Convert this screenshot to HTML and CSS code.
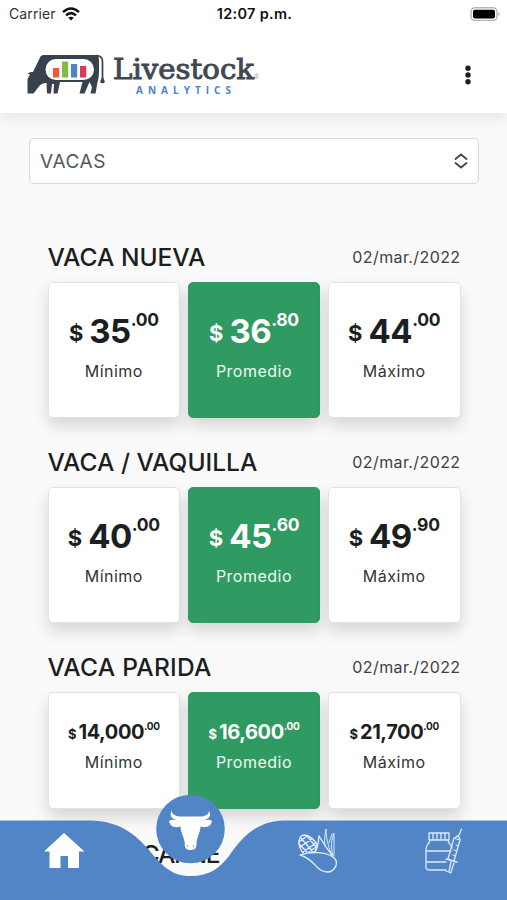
FILE: index.html
```html
<!DOCTYPE html>
<html lang="es">
<head>
    <meta charset="UTF-8">
    <meta name="viewport" content="width=device-width, initial-scale=1.0">
    <title>Livestock Analytics</title>
    <link rel="stylesheet" href="styles.css">
</head>
<body>

    <!-- Header -->
    <header class="header">
        <div class="status-bar">
            <div class="carrier">
                <span>Carrier</span>
                <svg width="18" height="14" viewBox="0 0 18 14" fill="none" stroke="#111" stroke-width="2.5">
                    <path d="M1 5.2Q9-2.2 17 5.2M4 8.4Q9 3.8 14 8.4"/>
                    <path d="M9 13.6L6.2 10.8Q9 8.5 11.8 10.8Z" fill="#111" stroke="none"/>
                </svg>
            </div>
            <span class="clock">12:07 p.m.</span>
            <svg class="battery" width="31" height="14" viewBox="0 0 31 14">
                <rect x="1" y="0.8" width="26" height="12.6" rx="4" fill="#fff" stroke="#b5b5b5" stroke-width="1.4"/>
                <rect x="3" y="2.8" width="22" height="8.6" rx="1.8" fill="#000"/>
                <path d="M28.5 4.8Q31 7 28.5 9.2Z" fill="#b5b5b5"/>
            </svg>
        </div>
        <div class="navbar">
            <svg class="logo" width="236" height="44" viewBox="0 0 236 44">
                <!-- Cow -->
                <path d="M13.5 2.500Q14.500 1 16.500 1H68Q72 1 72 6V16Q72 24 70.500 28L68.500 39.500H63.500L65 33L62.500 28L57.500 39.500H52.500L55.500 28H33L30.500 39.500H26.500L27 30H25L24 39.500H20L19.500 29Q14 29 11.500 33L6.500 39.500H0.500V25L3 20.500L0.500 19.500Q3 17.500 6 18Z" fill="#38424d"/>
                <path d="M69 1.700Q75.500 1.500 75.500 8V25" fill="none" stroke="#38424d" stroke-width="1.700"/>
                <path d="M75.500 22L78 28Q75.500 30.500 73 28Z" fill="#38424d"/>
                <rect x="18.500" y="5" width="48.500" height="21" rx="10.500" fill="#fff"/>
                <rect x="26" y="14" width="6.200" height="9.500" fill="#ed5a34"/>
                <rect x="35" y="7.500" width="6.200" height="16" fill="#7fba42"/>
                <rect x="44" y="10" width="6.200" height="13.500" fill="#4a82cc"/>
                <rect x="53" y="12" width="6.200" height="11.500" fill="#dc3b51"/>
                <text class="logo-name" x="86" y="25" textLength="141" lengthAdjust="spacingAndGlyphs">Livestock</text>
                <text class="logo-mark" x="227" y="25">®</text>
                <text class="logo-sub" x="109" y="39.500" textLength="95">ANALYTICS</text>
            </svg>
            <svg class="menu" width="8" height="20" viewBox="0 0 8 20" fill="#1b1f22">
                <circle cx="4" cy="3.200" r="2.700"/>
                <circle cx="4" cy="10" r="2.700"/>
                <circle cx="4" cy="16.800" r="2.700"/>
            </svg>
        </div>
    </header>

    <!-- Category select -->
    <div class="select">
        <span>VACAS</span>
        <svg width="14" height="16" viewBox="0 0 14 16" fill="none" stroke="#3e4449" stroke-width="1.800" stroke-linecap="round" stroke-linejoin="round">
            <path d="M1.500 6L7 1.500L12.500 6M1.500 10L7 14.500L12.500 10"/>
        </svg>
    </div>

    <!-- Prices -->
    <main class="prices">
        <section class="group">
            <div class="group-header">
                <h2>VACA NUEVA</h2>
                <span class="date">02/mar./2022</span>
            </div>
            <div class="cards">
                <div class="card">
                    <div class="price"><small>$</small><b>35</b><sup>.00</sup></div>
                    <p>Mínimo</p>
                </div>
                <div class="card average">
                    <div class="price"><small>$</small><b>36</b><sup>.80</sup></div>
                    <p>Promedio</p>
                </div>
                <div class="card">
                    <div class="price"><small>$</small><b>44</b><sup>.00</sup></div>
                    <p>Máximo</p>
                </div>
            </div>
        </section>

        <section class="group">
            <div class="group-header">
                <h2>VACA / VAQUILLA</h2>
                <span class="date">02/mar./2022</span>
            </div>
            <div class="cards">
                <div class="card">
                    <div class="price"><small>$</small><b>40</b><sup>.00</sup></div>
                    <p>Mínimo</p>
                </div>
                <div class="card average">
                    <div class="price"><small>$</small><b>45</b><sup>.60</sup></div>
                    <p>Promedio</p>
                </div>
                <div class="card">
                    <div class="price"><small>$</small><b>49</b><sup>.90</sup></div>
                    <p>Máximo</p>
                </div>
            </div>
        </section>

        <section class="group">
            <div class="group-header">
                <h2 class="wide">VACA PARIDA</h2>
                <span class="date">02/mar./2022</span>
            </div>
            <div class="cards">
                <div class="card compact">
                    <div class="price"><small>$</small><b>14,000</b><sup>.00</sup></div>
                    <p>Mínimo</p>
                </div>
                <div class="card compact average">
                    <div class="price"><small>$</small><b>16,600</b><sup>.00</sup></div>
                    <p>Promedio</p>
                </div>
                <div class="card compact">
                    <div class="price"><small>$</small><b>21,700</b><sup>.00</sup></div>
                    <p>Máximo</p>
                </div>
            </div>
        </section>

        <section class="group">
            <div class="group-header">
                <h2 class="tight">VACA P/ CARNE</h2>
            </div>
        </section>
    </main>

    <!-- Bottom tabs -->
    <nav class="tabs">
        <svg width="507" height="106" viewBox="0 794 507 106">
            <path d="M0 820.500H90C120 821 136 835 149 850C162 866 172 876 190 876C209 876 219 869 229 856C242 837 257 821 284 820.500H507V900H0Z" fill="#5285c5"/>
            <circle cx="190.500" cy="829" r="34.300" fill="#5285c5"/>

            <!-- Home -->
            <path d="M64 833L84.500 851.500H79V868H68V856H60.500V868H49.500V851.500H44Z" fill="#fff"/>

            <!-- Cow head -->
            <path d="M171.500 810.500C172 814 175 816.500 181 816.500H200C206 816.500 209 814 209 810.500C211.500 816 209 819 203 820.500C206 819.500 210 819.500 212 821C211 826 207 828.500 200.500 826.500C200.500 832 197 837 196.500 843C196.500 848 195 850 190.500 850C186 850 184.500 848 184.800 843C184 837 180.500 832 180.500 826.500C174 828.500 170 826 169 821C171 819.500 175 819.500 178 820.500C172 819 169 816 171.500 810.500Z" fill="#fff"/>
            <circle cx="187.500" cy="846" r="0.700" fill="#5285c5"/>
            <circle cx="193.500" cy="846" r="0.700" fill="#5285c5"/>

            <!-- Corn -->
            <g fill="none" stroke="#e4f0ff" stroke-width="1.300" stroke-linejoin="round" stroke-linecap="round">
                <path d="M303 853C297 845 298 836 304 835C309 835 315 840 317 845L315 852"/>
                <path d="M299 842L307 836M300 847L312 839M303 852L316 843M309 852L316 847M301 838L313 852M299 844L307 852M307 836L316 847"/>
                <path d="M315 852C319 846 318 841 319 836C323 843 328 850 332 855"/>
                <path d="M300 855C311 851 326 852 333 857C340 862 335 872 327 872C315 871 315 859 300 855Z"/>
                <path d="M325 846C324 840 325 834 326 829C326 839 329 849 332 855M333 856C330 846 332 839 334 833V856M329 843L332 834" stroke-width="0.900"/>
            </g>

            <!-- Vaccine -->
            <g fill="none" stroke="#dbeaff" stroke-width="1.300" stroke-linejoin="round" stroke-linecap="round">
                <path d="M429 833H449V840H429ZM433 833V840M437 833V840M441 833V840M445 833V840"/>
                <path d="M430 840C429 845 426 844 426 849V867Q426 870 430 870H446M448 840C449 845 452 845 452 848M426 851H451M426 862H446"/>
                <path d="M454 838L460 840L454 861L448 859ZM455 838L457 836L459 837L460 840M458.500 836L461.500 829M446 859L457 862M451 862L449 871M454 863L451 872M446 871L451 873M456 845L458 846M454 850L457 851M453 855L455 856"/>
            </g>
        </svg>
    </nav>

</body>
</html>
```
FILE: styles.css
```css
* {
    margin: 0;
    padding: 0;
    box-sizing: border-box;
}
html, body {
    height: 900px;
    overflow: hidden;
}
body {
    font-family: Inter, sans-serif;
    background-color: #fafafa;
    color: #1b1f22;
}
svg {
    display: block;
}
.header {
    height: 113px;
    background: #fff;
    box-shadow: 0 6px 14px rgba(0, 0, 0, 0.08);
}
.status-bar {
    display: grid;
    grid-template-columns: 1fr auto 1fr;
    align-items: center;
    height: 27px;
    padding: 0 6px 0 9px;
    font-size: 14px;
}
.carrier {
    display: flex;
    align-items: center;
    gap: 6px;
}
.carrier span {
    color: #333;
    letter-spacing: 0.1px;
}
.clock {
    margin-right: 1px;
    font-weight: 600;
    font-size: 14.5px;
    letter-spacing: 0.3px;
    color: #111;
}
.battery {
    justify-self: end;
}
.navbar {
    display: flex;
    justify-content: space-between;
    padding: 27px 35px 0 27px;
}
.menu {
    margin-top: 11px;
}
.logo-name {
    font: 500 27px "DejaVu Serif", serif;
    fill: #414851;
    stroke: #414851;
    stroke-width: 0.9px;
}
.logo-mark {
    font: 7px "Liberation Sans", sans-serif;
    fill: #999;
}
.logo-sub {
    font: bold 10px "Open Sans", sans-serif;
    fill: #4a82cc;
}
.select {
    display: flex;
    justify-content: space-between;
    align-items: center;
    height: 46px;
    margin: 25px 28px 0 29px;
    padding: 0 10px;
    border: 1px solid #d3d8da;
    border-radius: 5px;
    background: #fff;
    font-size: 19px;
    letter-spacing: 0.6px;
    color: #53585c;
}
.prices {
    padding: 55px 46.5px 0 47.5px;
}
.group-header {
    display: flex;
    justify-content: space-between;
    align-items: center;
    height: 42.5px;
    padding-bottom: 6px;
}
.group {
    margin-bottom: 26.5px;
}
h2 {
    font-size: 24.5px;
    font-weight: 500;
    white-space: nowrap;
}
h2.wide {
    letter-spacing: 0.25px;
}
h2.tight {
    letter-spacing: -1.3px;
}
.date {
    font-size: 16px;
    letter-spacing: 0.4px;
    color: #3c4043;
}
.cards {
    display: grid;
    grid-template-columns: repeat(3, 1fr);
    gap: 7.5px;
}
.card {
    height: 136px;
    padding-top: 24px;
    border: 1px solid #e2e3e4;
    border-radius: 5px;
    background: #fff;
    text-align: center;
    box-shadow: 0 8px 16px rgba(0, 0, 0, 0.15);
}
.card.average {
    background: #2f9a61;
    border-color: #2f9a61;
    color: #fff;
}
.card p {
    margin-top: 4px;
    line-height: 24px;
    font-size: 16px;
    letter-spacing: 0.5px;
    color: #333;
}
.card.average p {
    color: #eefbf2;
}
.price {
    display: flex;
    justify-content: center;
    height: 48px;
    line-height: 48px;
    font-weight: 700;
}
.price small {
    margin-right: 6px;
    font-size: 22px;
    line-height: 52px;
}
.price b {
    font-size: 33px;
    font-weight: 700;
    letter-spacing: -0.5px;
}
.price sup {
    font-size: 17.5px;
    line-height: 26px;
    letter-spacing: -0.3px;
}
.card.compact {
    height: 117.5px;
}
.compact .price {
    height: 30px;
    line-height: 30px;
}
.compact .price small {
    margin-right: 2px;
    font-size: 13px;
    line-height: 34px;
}
.compact .price b {
    font-size: 20px;
    letter-spacing: -0.4px;
}
.compact .price sup {
    font-size: 10px;
    line-height: 18px;
}
.compact p {
    margin-top: 3px;
}
.tabs {
    position: fixed;
    left: 0;
    bottom: 0;
}
```
